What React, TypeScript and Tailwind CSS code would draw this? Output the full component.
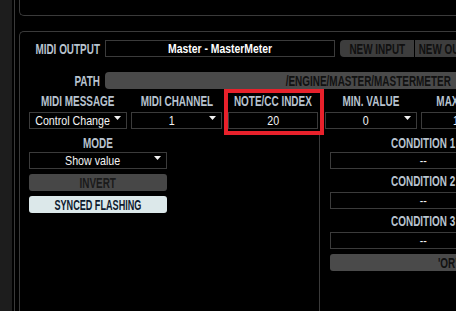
const font = "font-['Liberation_Sans','Arial',sans-serif]";
const label = "font-bold text-[14px] leading-none text-[#b8c3cf]";

// the app uses a narrow face; squeeze the text sideways
function T({ children, s = "scale-x-[0.71]", o = "origin-center" }: { children: React.ReactNode; s?: string; o?: string }) {
  return <span className={`inline-block whitespace-nowrap ${s} ${o}`}>{children}</span>;
}

function Caret() {
  return (
    <svg className="absolute right-[5px] top-[3px]" width="7" height="4" viewBox="0 0 7 4">
      <path d="M0 0h7L3.5 4z" fill="#f2f2f2" />
    </svg>
  );
}

function Select({ value, className, caret = true }: { value: string; className: string; caret?: boolean }) {
  return (
    <div
      className={`relative flex h-[17px] shrink-0 items-center justify-center border border-[#3b3b3b] bg-black text-[13px] leading-none text-[#f4f4f4] ${caret ? "pr-[10px]" : ""} ${className}`}
    >
      <T s="scale-x-[0.82]">{value}</T>
      {caret && <Caret />}
    </div>
  );
}

function Column({ title, value, className, caret = true }: { title: string; value: string; className: string; caret?: boolean }) {
  return (
    <div className={`flex shrink-0 flex-col ${className}`}>
      <div className={`flex h-[23px] items-center justify-center ${label}`}>
        <T>{title}</T>
      </div>
      <Select value={value} caret={caret} className="w-full" />
    </div>
  );
}

function Condition({ n, first = false }: { n: number; first?: boolean }) {
  return (
    <>
      <div className={`flex w-[186px] items-center justify-center ${first ? "h-[19px]" : "h-[23px]"} ${label}`}>
        <T>CONDITION {n}</T>
      </div>
      <Select value="--" caret={false} className="w-[186px]" />
    </>
  );
}

export default function App() {
  return (
    <div className={`flex h-[311px] w-[456px] overflow-hidden bg-black ${font}`}>
      <div className="w-[12px] shrink-0 bg-[#1d1d1d]" />
      <div className="ml-[2px] w-px shrink-0 bg-[#3a3a3a]" />
      <div className="ml-[4px] flex w-[700px] shrink-0 flex-col">
        <div className="h-[16px] shrink-0 rounded-bl-[5px] border-b border-l border-[#3a3a3a]" />
        <div className="mt-[15px] flex flex-1 flex-col rounded-tl-[5px] border-l border-t border-[#3a3a3a] pt-[8px]">
          {/* midi output */}
          <div className="flex h-[17px] items-center">
            <div className={`flex w-[80px] shrink-0 justify-end ${label}`}>
              <T o="origin-right">MIDI OUTPUT</T>
            </div>
            <div className="ml-[5px] flex h-[17px] w-[230px] shrink-0 items-center justify-center border border-[#3b3b3b] text-[13px] font-bold leading-none text-white">
              <T s="scale-x-[0.8]">Master - MasterMeter</T>
            </div>
            <div className="ml-[5px] flex h-[17px] w-[74px] shrink-0 items-center justify-center rounded-l-[4px] bg-[#3d3d3d] text-[14px] font-bold leading-none text-[#101010]">
              <T>NEW INPUT</T>
            </div>
            <div className="ml-px flex h-[17px] w-[74px] shrink-0 items-center justify-center bg-[#3d3d3d] text-[14px] font-bold leading-none text-[#101010]">
              <T>NEW OUTPUT</T>
            </div>
          </div>

          {/* path */}
          <div className="mt-[15px] flex h-[17px] items-center">
            <div className={`flex w-[80px] shrink-0 justify-end ${label}`}>
              <T o="origin-right">PATH</T>
            </div>
            <div className="ml-[5px] flex h-[17px] w-[526px] shrink-0 items-center justify-center rounded-[4px] bg-[#4a4a4a] text-[14px] font-bold leading-none text-[#111]">
              <T>/ENGINE/MASTER/MASTERMETER</T>
            </div>
          </div>

          {/* message row */}
          <div className="relative flex pl-[9px]">
            <Column title="MIDI MESSAGE" value="Control Change" className="w-[98px]" />
            <Column title="MIDI CHANNEL" value="1" className="ml-[4px] w-[91px]" />
            <Column title="NOTE/CC INDEX" value="20" caret={false} className="ml-[6px] w-[90px]" />
            <Column title="MIN. VALUE" value="0" className="ml-[7px] w-[92px]" />
            <Column title="MAX. VALUE" value="127" className="ml-[4px] w-[92px]" />
            <div className="absolute left-[204px] top-0 h-[46px] w-[100px] border-4 border-[#e8212b]" />
          </div>

          <div className="mt-[4px] flex flex-1">
            <div className="flex w-[300px] shrink-0 flex-col border-r border-[#3a3a3a] pl-[9px]">
              <div className={`flex h-[19px] w-[138px] items-center justify-center ${label}`}>
                <T>MODE</T>
              </div>
              <Select value="Show value" className="w-[138px]" />
              <div className="mt-[5px] flex h-[17px] w-[138px] items-center justify-center rounded-[3px] bg-[#474747] text-[14px] font-bold leading-none text-[#1a1a1a]">
                <T>INVERT</T>
              </div>
              <div className="mt-[5px] flex h-[17px] w-[138px] items-center justify-center rounded-[3px] bg-[#dce8ea] text-[14px] font-bold leading-none text-[#0d1a2e]">
                <T s="scale-x-[0.65]">SYNCED FLASHING</T>
              </div>
            </div>
            <div className="flex flex-col pl-[10px]">
              <Condition n={1} first />
              <Condition n={2} />
              <Condition n={3} />
              <div className="mt-[5px] flex h-[17px] w-[269px] items-center justify-center rounded-[3px] bg-[#4a4a4a] text-[14px] font-bold leading-none text-[#111]">
                <T>'OR' LOGIC</T>
              </div>
            </div>
          </div>
        </div>
      </div>
    </div>
  );
}
